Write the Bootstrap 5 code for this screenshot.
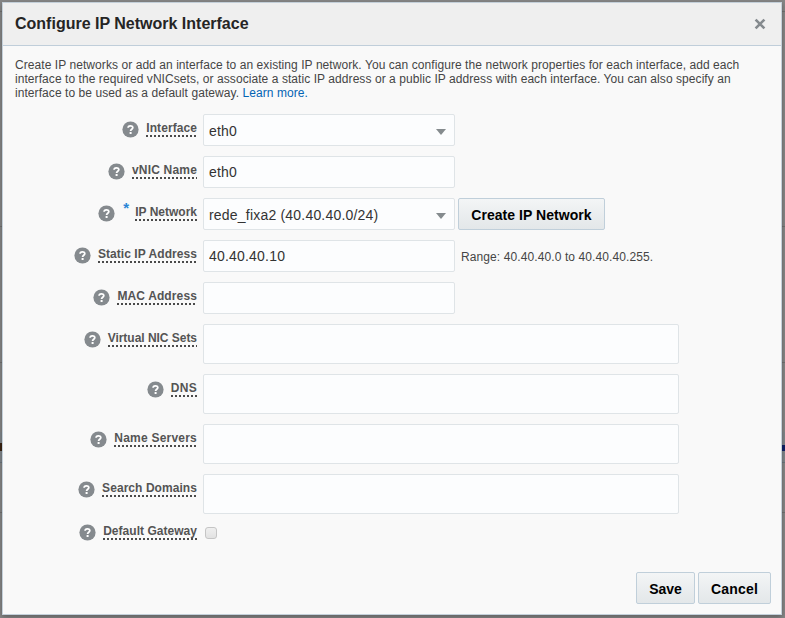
<!DOCTYPE html>
<html lang="en">
<head>
<meta charset="utf-8">
<meta name="viewport" content="width=device-width, initial-scale=1">
<title>Configure IP Network Interface</title>
<link href="https://cdn.jsdelivr.net/npm/bootstrap@5.3.0/dist/css/bootstrap.min.css" rel="stylesheet">
<style>
html,body{height:618px;overflow:hidden}
body{background:#868686;font-family:"Liberation Sans",Arial,sans-serif;font-size:12px;line-height:14px;color:#454545;padding:2px 3px 3px 2px;position:relative}
.edge-line{position:absolute;left:0;right:0;height:1px;background:#717171}
.edge-band{position:absolute;left:0;right:0;top:432px;height:31px;background:#80868a;border-bottom:1px solid #6b767d}
.edge-mark{position:absolute;top:443px;width:2px;height:8px}
.edge-mark.end-0{width:3px;height:6px;top:445px}
.dialog-box{position:relative;width:780px;height:613px;border:1px solid #c4d0da;background:#f9f9f9;box-shadow:0 2px 5px rgba(0,0,0,.3)}
.dialog-head{height:43px;background:#efefef;border-bottom:1px solid #c0ceda;padding:0 15px 0 12px}
.dialog-head h1{font-size:16px;line-height:20px;font-weight:700;color:#252525;margin:0}
.close-x{width:12px;height:12px;padding:0;border:0;background:none;line-height:0}
.intro-text{margin:12px 12px 14px;letter-spacing:.067px}
.intro-text a{color:#0464b4;text-decoration:none}
.form-rows{gap:10px}
.label-cell{width:194px;gap:7px;padding-top:7px;margin-right:6px}
.label-cell svg{width:17px;height:17px;flex:none}
.dotted-label{font-weight:700;color:#545454;line-height:14px;height:16px;white-space:nowrap;background:repeating-linear-gradient(90deg,#4a4a4a 0 2px,transparent 2px 4px) left bottom/100% 2px no-repeat}
.form-rows>:nth-child(1) label{letter-spacing:.08px}
.form-rows>:nth-child(2) label{letter-spacing:.19px}
.form-rows>:nth-child(3) label{letter-spacing:0}
.form-rows>:nth-child(4) label{letter-spacing:.06px}
.form-rows>:nth-child(5) label{letter-spacing:.12px}
.form-rows>:nth-child(6) label{letter-spacing:-.03px}
.form-rows>:nth-child(7) label{letter-spacing:.3px}
.form-rows>:nth-child(8) label{letter-spacing:.22px}
.form-rows>:nth-child(9) label{letter-spacing:.06px}
.form-rows>:nth-child(10) label{letter-spacing:.03px}
.required-star{color:#2a86d6;font-weight:700;font-size:15px;line-height:14px;width:6px;height:14px;margin:-4px -1px 0 1px}
.field-box{width:252px;height:32px;min-height:0;border:1px solid #dfe4e7;border-radius:2px;background:#fcfdfe;padding:0 5px;font-size:14px;line-height:30px;color:#333;letter-spacing:.2px;box-shadow:none}
select.field-box{background:#fcfdfe url("data:image/svg+xml,%3Csvg xmlns='http://www.w3.org/2000/svg' width='10' height='6'%3E%3Cpath d='M0 0H10L5 6Z' fill='%23858b8e'/%3E%3C/svg%3E") right 8px top 14px/10px 6px no-repeat;padding-top:1px}
.field-box.wide-box{width:476px;height:40px}
.range-note{margin:2px 0 0 6px;letter-spacing:.1px}
.grad-btn{height:32px;padding:1px 0 0;border:1px solid #c0cfda;border-radius:2px;background:linear-gradient(#f3f5f6,#e3e7e9);color:#000;font-size:14px;font-weight:700;line-height:31px;white-space:nowrap}
.create-btn{width:147px;margin-left:3px;letter-spacing:.05px}
.save-btn{width:59px}
.cancel-btn{width:73px;letter-spacing:.2px}
.tiny-check{width:12px;height:12px;margin:10px 0 0 2px;border:1px solid #c5c5c5;border-radius:2px;background:linear-gradient(#efefef,#e2e2e2)}
.gateway-row{margin-top:-7px;height:24px}
.dialog-foot{gap:3px;margin:31px 10px 0 0}
</style>
<script src="https://cdn.jsdelivr.net/npm/bootstrap@5.3.0/dist/js/bootstrap.bundle.min.js"></script>
</head>
<body>
<svg class="d-none" aria-hidden="true"><symbol id="help" viewBox="0 0 17 17"><circle cx="8.5" cy="8.5" r="8.1" fill="#858a8e"/><path d="M6.1 6.8C6.1 4.2 10.8 4.1 10.8 6.6C10.8 8.2 8.6 8.2 8.6 10" fill="none" stroke="#fff" stroke-width="1.8"/><path d="M7.6 11h2v2h-2z" fill="#fff"/></symbol></svg>
<div class="edge-line" style="top:11px"></div><div class="edge-line" style="top:226px"></div><div class="edge-line" style="top:362px"></div><div class="edge-line" style="top:512px"></div>
<div class="edge-band"></div><div class="edge-mark start-0" style="background:#3b2412"></div><div class="edge-mark end-0" style="background:#101f66"></div>
<main class="dialog-box">
<header class="dialog-head d-flex align-items-center justify-content-between">
<h1>Configure IP Network Interface</h1>
<button class="close-x" aria-label="Close"><svg width="12" height="12" viewBox="0 0 12 12"><path d="M1.6 1.6l8.8 8.8M10.4 1.6l-8.8 8.8" stroke="#858a8e" stroke-width="2.6"/></svg></button>
</header>
<p class="intro-text">Create IP networks or add an interface to an existing IP network. You can configure the network properties for each interface, add each<br>interface to the required vNICsets, or associate a static IP address or a public IP address with each interface. You can also specify an<br>interface to be used as a default gateway. <a href="#">Learn more.</a></p>
<form class="form-rows d-flex flex-column">
<div class="d-flex"><div class="label-cell d-flex justify-content-end"><svg><use href="#help"/></svg><label class="dotted-label" for="f1">Interface</label></div><select id="f1" class="form-select field-box"><option>eth0</option></select></div>
<div class="d-flex"><div class="label-cell d-flex justify-content-end"><svg><use href="#help"/></svg><label class="dotted-label" for="f2">vNIC Name</label></div><input id="f2" class="form-control field-box" value="eth0"></div>
<div class="d-flex"><div class="label-cell d-flex justify-content-end"><svg><use href="#help"/></svg><span class="required-star">*</span><label class="dotted-label" for="f3">IP Network</label></div><select id="f3" class="form-select field-box"><option>rede_fixa2 (40.40.40.0/24)</option></select><button type="button" class="btn grad-btn create-btn">Create IP Network</button></div>
<div class="d-flex"><div class="label-cell d-flex justify-content-end"><svg><use href="#help"/></svg><label class="dotted-label" for="f4">Static IP Address</label></div><input id="f4" class="form-control field-box" value="40.40.40.10"><span class="range-note align-self-center">Range: 40.40.40.0 to 40.40.40.255.</span></div>
<div class="d-flex"><div class="label-cell d-flex justify-content-end"><svg><use href="#help"/></svg><label class="dotted-label" for="f5">MAC Address</label></div><input id="f5" class="form-control field-box"></div>
<div class="d-flex"><div class="label-cell d-flex justify-content-end"><svg><use href="#help"/></svg><label class="dotted-label" for="f6">Virtual NIC Sets</label></div><input id="f6" class="form-control field-box wide-box"></div>
<div class="d-flex"><div class="label-cell d-flex justify-content-end"><svg><use href="#help"/></svg><label class="dotted-label" for="f7">DNS</label></div><input id="f7" class="form-control field-box wide-box"></div>
<div class="d-flex"><div class="label-cell d-flex justify-content-end"><svg><use href="#help"/></svg><label class="dotted-label" for="f8">Name Servers</label></div><input id="f8" class="form-control field-box wide-box"></div>
<div class="d-flex"><div class="label-cell d-flex justify-content-end"><svg><use href="#help"/></svg><label class="dotted-label" for="f9">Search Domains</label></div><input id="f9" class="form-control field-box wide-box"></div>
<div class="d-flex gateway-row"><div class="label-cell d-flex justify-content-end"><svg><use href="#help"/></svg><label class="dotted-label" for="f10">Default Gateway</label></div><input id="f10" type="checkbox" class="form-check-input tiny-check"></div>
</form>
<footer class="dialog-foot d-flex justify-content-end"><button class="btn grad-btn save-btn">Save</button><button class="btn grad-btn cancel-btn">Cancel</button></footer>
</main>
</body>
</html>
